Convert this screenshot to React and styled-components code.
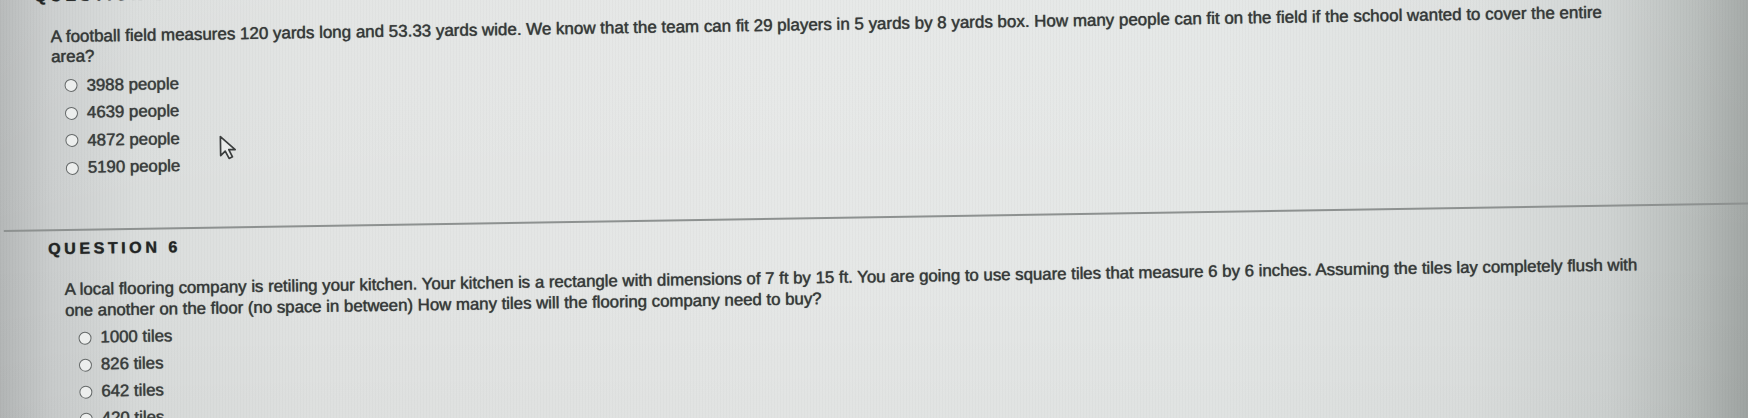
import React from "react";
import styled, {createGlobalStyle} from "styled-components";

const GlobalStyle = createGlobalStyle`
  html, body {
    margin: 0;
    padding: 0;
    background: #dfe1e0;
  }
  body {
    font-family: "Liberation Sans", Arial, sans-serif;
    overflow: hidden;
  }
`;

const questions = [
    {
        number: 5,
        indent: 34,
        stem: [
            "A football field measures 120 yards long and 53.33 yards wide. We know that the team can fit 29 players in 5 yards by 8 yards box. How many people can fit on the field if the school wanted to cover the entire",
            "area?"
        ],
        answers: ["3988 people", "4639 people", "4872 people", "5190 people"],
        rowHeight: 27.5
    },
    {
        number: 6,
        indent: 44,
        stem: [
            "A local flooring company is retiling your kitchen. Your kitchen is a rectangle with dimensions of 7 ft by 15 ft. You are going to use square tiles that measure 6 by 6 inches. Assuming the tiles lay completely flush with",
            "one another on the floor (no space in between) How many tiles will the flooring company need to buy?"
        ],
        answers: ["1000 tiles", "826 tiles", "642 tiles", "420 tiles"],
        rowHeight: 27
    }
];

function Cursor() {
    return (
        <CursorMark width="20" height="26" viewBox="0 0 20 26">
            <path d="M2 2 L2 21 L6.6 16.6 L10.4 24 L13.8 22.4 L10.2 15.2 L16.6 15.2 Z"
                  fill="#e9ebea" stroke="#3b3e3e" strokeWidth="1.7" strokeLinejoin="round"/>
        </CursorMark>
    );
}

function Question({q, first}) {
    return (
        <Section $indent={q.indent} $first={first}>
            <Heading>QUESTION {q.number}</Heading>
            <Stem $first={first}>
                {q.stem.map((line, i) => (
                    <StemLine key={i}>{line}</StemLine>
                ))}
            </Stem>
            <Answers $first={first}>
                {q.answers.map((a) => (
                    <Answer key={a} $h={q.rowHeight}>
                        <Radio/>
                        <span>{a}</span>
                    </Answer>
                ))}
            </Answers>
            {first && <Cursor/>}
        </Section>
    );
}

export default function App() {
    return (
        <>
            <GlobalStyle/>
            <Page>
                <Sheet>
                    <Question q={questions[0]} first/>
                    <Divider/>
                    <Question q={questions[1]}/>
                </Sheet>
            </Page>
        </>
    );
}

const Page = styled.div`
  position: relative;
  width: 1748px;
  height: 418px;
  overflow: hidden;
  background:
    repeating-linear-gradient(90deg, rgba(0, 0, 0, 0.018) 0 1px, transparent 1px 3px),
    linear-gradient(180deg, rgba(255, 255, 255, 0.05) 0%, rgba(255, 255, 255, 0) 60%, rgba(0, 0, 0, 0.02) 100%),
    linear-gradient(90deg, #b5b8b8 0%, #cbcece 3%, #dadddc 8%, #e2e4e3 18%, #e6e8e7 45%, #e4e7e6 70%, #dde0df 84%, #cfd3d2 92%, #b7bcba 97%, #a1a6a4 100%);
`;

const Sheet = styled.div`
  width: 1800px;
  transform: rotate(-0.9deg);
  transform-origin: 0 0;
  color: #353838;
  -webkit-text-stroke: 0.25px #3a3d3d;
  text-shadow: 0 0 0.8px rgba(40, 42, 42, 0.7);
`;

const Section = styled.section`
  position: relative;
  padding-left: ${p => p.$indent}px;
  margin-top: ${p => (p.$first ? -13 : 8)}px;
`;

const Heading = styled.h2`
  margin: 0;
  font-family: "Liberation Sans", Arial, sans-serif;
  font-size: 16px;
  font-weight: 700;
  line-height: 20px;
  letter-spacing: 3.6px;
  color: #222424;
`;

const Stem = styled.div`
  margin-top: ${p => (p.$first ? 21 : 20.5)}px;
  padding-left: 16px;
  font-size: ${p => (p.$first ? 16.95 : 16.8)}px;
  line-height: ${p => (p.$first ? 20 : 21)}px;
`;

const StemLine = styled.div`
  white-space: nowrap;
`;

const Answers = styled.ul`
  list-style: none;
  margin: ${p => (p.$first ? 5 : 3.5)}px 0 0;
  padding: 0 0 0 29px;
`;

const Answer = styled.li`
  display: flex;
  align-items: center;
  gap: 9px;
  height: ${p => p.$h}px;
  font-size: 16.8px;
  color: #3a3d3d;
`;

const Radio = styled.span`
  box-sizing: border-box;
  width: 13px;
  height: 13px;
  border-radius: 50%;
  border: 1.8px solid #656969;
  background: #eceeed;
  flex: none;
`;

const Divider = styled.hr`
  margin: 47px 0 0;
  border: 0;
  height: 1.5px;
  background: #8d9190;
`;

const CursorMark = styled.svg`
  position: absolute;
  left: 216px;
  top: 151px;
`;
